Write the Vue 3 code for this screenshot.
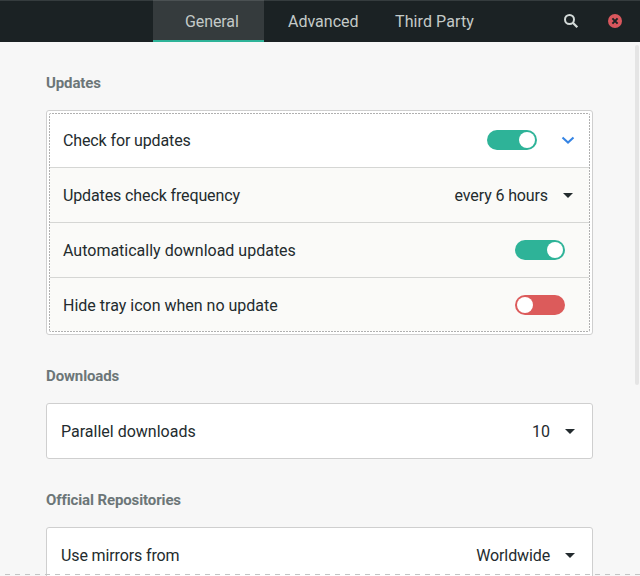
<script setup>
import { ref } from 'vue'

const tabs = ['General', 'Advanced', 'Third Party']
const active = ref('General')
const checkUpdates = ref(true)
const autoDownload = ref(true)
const hideTray = ref(false)
</script>

<template>
  <div class="window">
    <header class="bar">
      <nav class="tabs">
        <button
          v-for="tab in tabs"
          :key="tab"
          class="tab"
          :class="{ active: tab === active }"
          @click="active = tab"
        >{{ tab }}</button>
      </nav>
      <div class="actions">
        <svg class="search" width="16" height="16" viewBox="0 0 16 16">
          <circle cx="6.5" cy="6.5" r="4.5" fill="none" stroke="#d3dad8" stroke-width="2" />
          <path d="M9.8 9.8 L14.3 14.3" stroke="#d3dad8" stroke-width="2.3" />
        </svg>
        <svg class="close" width="14" height="14" viewBox="0 0 14 14">
          <circle cx="7" cy="7" r="7" fill="#d9575d" />
          <path d="M4.4 4.4 L9.6 9.6 M9.6 4.4 L4.4 9.6" stroke="#1b2224" stroke-width="2" />
        </svg>
      </div>
    </header>

    <main class="content">
      <h2>Updates</h2>
      <section class="card focused">
        <div class="inner">
          <div class="row head">
            <span class="label tight">Check for updates</span>
            <span class="switch" :class="{ on: checkUpdates }" @click="checkUpdates = !checkUpdates"><i></i></span>
            <svg class="chevron" width="14" height="10" viewBox="0 0 14 10">
              <path d="M1.5 2.4 L7 7.6 L12.5 2.4" fill="none" stroke="#3584e4" stroke-width="2" />
            </svg>
          </div>
          <div class="row">
            <span class="label tight">Updates check frequency</span>
            <span class="value tight">every 6 hours</span>
            <svg class="caret" width="10" height="5" viewBox="0 0 10 5"><path d="M0 0H10L5 5Z" fill="#232b2e" /></svg>
          </div>
          <div class="row">
            <span class="label">Automatically download updates</span>
            <span class="switch" :class="{ on: autoDownload }" @click="autoDownload = !autoDownload"><i></i></span>
          </div>
          <div class="row">
            <span class="label">Hide tray icon when no update</span>
            <span class="switch" :class="{ on: hideTray }" @click="hideTray = !hideTray"><i></i></span>
          </div>
        </div>
      </section>

      <h2>Downloads</h2>
      <section class="card single">
        <span class="label">Parallel downloads</span>
        <span class="value">10</span>
        <svg class="caret" width="10" height="5" viewBox="0 0 10 5"><path d="M0 0H10L5 5Z" fill="#232b2e" /></svg>
      </section>

      <h2>Official Repositories</h2>
      <section class="card single">
        <span class="label tight">Use mirrors from</span>
        <span class="value tight">Worldwide</span>
        <svg class="caret" width="10" height="5" viewBox="0 0 10 5"><path d="M0 0H10L5 5Z" fill="#232b2e" /></svg>
      </section>
    </main>
    <div class="scrollbar"></div>
    <div class="undershoot"></div>
  </div>
</template>

<style>
body { background: #f7f7f7; }
</style>

<style scoped>
.window {
  position: relative;
  box-sizing: border-box;
  width: 640px;
  height: 576px;
  overflow: hidden;
  background: #f7f7f7;
  color: #232b2e;
  font: 16px/20px Roboto, sans-serif;
}
.bar {
  box-sizing: border-box;
  display: flex;
  justify-content: space-between;
  height: 42px;
  padding-left: 153px;
  background: #1b2224;
  box-shadow: inset 0 1px #353c3e;
}
.tabs { display: flex; }
.tab {
  box-sizing: border-box;
  height: 42px;
  margin: 0;
  padding: 3px 0 2px 24px;
  border: 0;
  background: none;
  color: #c4cac8;
  font: inherit;
  text-align: left;
  white-space: nowrap;
}
.tab:first-child { width: 111px; padding-left: 32px; letter-spacing: -0.1px; }
.tab:nth-child(2) { width: 107px; }
.tab:nth-child(3) { letter-spacing: 0.1px; }
.tab.active {
  background: #353b3d;
  box-shadow: inset 0 1px #4b5153, inset 0 -2px #2eb398;
}
.actions {
  display: flex;
  align-items: center;
  gap: 29px;
  padding-right: 18px;
}
.content { padding: 31px 47px 0 46px; }
h2 {
  margin: 0 0 17px;
  color: #6c7678;
  font-size: 15px;
  line-height: 20px;
  font-weight: 700;
  letter-spacing: -0.12px;
}
.card {
  box-sizing: border-box;
  border: 1px solid #cfcfcf;
  border-radius: 3px;
  background: #fff;
}
.focused { height: 225px; padding: 2px; margin-bottom: 31px; }
.inner {
  box-sizing: border-box;
  height: 219px;
  padding: 1px;
  border-radius: 2px;
  background:
    repeating-linear-gradient(90deg, #b0b0b0 0 2px, transparent 2px 3px) 0 0 / 100% 1px no-repeat,
    repeating-linear-gradient(90deg, #b0b0b0 0 2px, transparent 2px 3px) 0 100% / 100% 1px no-repeat,
    repeating-linear-gradient(180deg, #b0b0b0 0 2px, transparent 2px 3px) 0 0 / 1px 100% no-repeat,
    repeating-linear-gradient(180deg, #b0b0b0 0 2px, transparent 2px 3px) 100% 0 / 1px 100% no-repeat;
}
.row {
  box-sizing: border-box;
  display: flex;
  align-items: center;
  height: 55px;
  padding: 0 24px 0 13px;
  border-top: 1px solid #d5d6d4;
  background: #fafaf8;
}
.row.head {
  height: 53px;
  padding-right: 14px;
  border-top: 0;
  background: #fff;
}
.row:last-child { height: 54px; }
.row .caret { margin-right: -8px; }
.single {
  display: flex;
  align-items: center;
  height: 56px;
  padding: 0 17px 0 14px;
  margin-bottom: 31px;
}
.label { flex: 1; }
.label, .value { padding-top: 2px; }
.head .label { padding-top: 0; }
.tight { letter-spacing: -0.12px; }
.caret { margin-left: 15px; margin-top: 1px; }
.chevron { margin-left: 24px; margin-bottom: 1px; }
.switch {
  box-sizing: border-box;
  display: flex;
  width: 50px;
  height: 20px;
  padding: 2px;
  border-radius: 10px;
  background: #dc5b5b;
}
.head .switch { margin-bottom: 1px; }
.switch i {
  width: 16px;
  height: 16px;
  border-radius: 50%;
  background: #fff;
}
.switch.on { justify-content: flex-end; background: #2eb398; }
.scrollbar {
  position: absolute;
  left: 635px;
  top: 45px;
  width: 4px;
  height: 340px;
  border-radius: 2px;
  background: #e5e5e5;
}
.undershoot {
  position: absolute;
  left: 0;
  right: 0;
  top: 574px;
  height: 1px;
  background: repeating-linear-gradient(90deg, transparent 0 5px, #c4c4c4 5px 10px);
}
</style>
